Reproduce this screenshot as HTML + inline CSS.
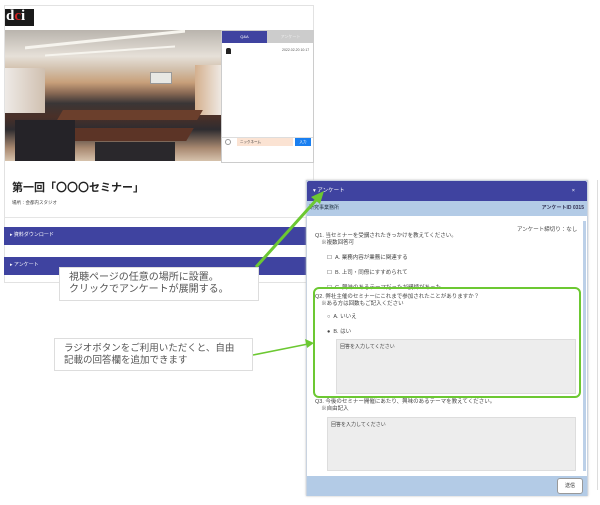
<!DOCTYPE html>
<html><head><meta charset="utf-8"><style>
*{margin:0;padding:0;box-sizing:border-box}
body{width:600px;height:505px;background:#fff;position:relative;overflow:hidden;font-family:"Liberation Sans","Noto Sans CJK JP",sans-serif;color:#333}
.a{position:absolute}
.bar{background:#3f43a0;color:#fff;font-size:5px;padding-left:6px;line-height:17px}
.t{font-size:5.5px;color:#444}
</style></head><body>
<div class="a" style="left:4px;top:5px;width:310px;height:278px;border:1px solid #e2e2e2"></div>
<div class="a" style="left:5px;top:9px;width:29px;height:17px;background:#1a1a1a;color:#fff;font:bold 15px 'Liberation Serif',serif;line-height:15px;padding-left:1px">d<span style="color:#c22">c</span>i</div>
<!-- photo -->
<div class="a" style="left:5px;top:30px;width:216px;height:131px;overflow:hidden;background:linear-gradient(180deg,#b9b4ad 0%,#e6e0d8 20%,#d2c0ac 30%,#c8a07a 40%,#8a6a55 48%,#3a3636 56%,#4a3028 66%,#2e2c30 76%,#a88870 90%,#d6c2ac 100%)">
 <div class="a" style="left:20px;top:8px;width:160px;height:3px;background:#f6f4ee;transform:skewY(-6deg)"></div>
 <div class="a" style="left:40px;top:20px;width:130px;height:2px;background:#f6f4ee;transform:skewY(-4deg)"></div>
 <div class="a" style="left:0;top:38px;width:40px;height:45px;background:linear-gradient(90deg,#eeeae6,#d0c0b0)"></div>
 <div class="a" style="left:190px;top:35px;width:26px;height:50px;background:linear-gradient(90deg,#d4b08e,#eee8e2)"></div>
 <div class="a" style="left:145px;top:42px;width:22px;height:12px;background:#e8e8e4;border:1px solid #999"></div>
 <div class="a" style="left:55px;top:80px;width:140px;height:10px;background:#6b3f2c;transform:skewX(-30deg)"></div>
 <div class="a" style="left:65px;top:98px;width:120px;height:13px;background:#5c3426;transform:skewX(-30deg)"></div>
 <div class="a" style="left:10px;top:90px;width:60px;height:41px;background:#252328"></div>
 <div class="a" style="left:90px;top:112px;width:80px;height:19px;background:#2a282c"></div>
</div>
<!-- chat -->
<div class="a" style="left:221px;top:30px;width:93px;height:133px;border:1px solid #ccc;background:#fff">
 <div class="a" style="left:0;top:0;width:45px;height:12px;background:#3f43a0;color:#fff;font-size:4px;text-align:center;line-height:12px">Q&amp;A</div>
 <div class="a" style="left:45px;top:0;width:47px;height:12px;background:#ccc;color:#eee;font-size:4px;text-align:center;line-height:12px">アンケート</div>
 <div class="a" style="left:4px;top:17px;width:5px;height:6px;background:#222;border-radius:2px 2px 0 0"></div>
 <div class="a" style="left:60px;top:17px;font-size:3.5px;color:#555">2022.02.20 10:17</div>
 <div class="a" style="left:0;top:106px;width:91px;height:1px;background:#ddd"></div>
 <div class="a" style="left:3px;top:108px;width:6px;height:6px;border:1px solid #999;border-radius:50%"></div>
 <div class="a" style="left:15px;top:107px;width:56px;height:8px;background:#fbe3d3;font-size:3.5px;line-height:8px;padding-left:3px">ニックネーム</div>
 <div class="a" style="left:73px;top:107px;width:16px;height:8px;background:#1a7ff0;color:#fff;font-size:3.5px;line-height:8px;text-align:center">入力</div>
</div>
<div class="a" style="left:12px;top:179px;font-size:11px;font-weight:bold;color:#222">第一回「〇〇〇セミナー」</div>
<div class="a t" style="left:12px;top:200px;font-size:4.5px">場所：会都内スタジオ</div>
<div class="a" style="left:5px;top:217px;width:308px;height:1px;background:#e5e5e5"></div>
<div class="a bar" style="left:4px;top:227px;width:302px;height:18px">▸ 資料ダウンロード</div>
<div class="a bar" style="left:4px;top:257px;width:302px;height:18px">▸ アンケート</div>
<!-- survey dialog -->
<div class="a" style="left:306px;top:180px;width:282px;height:316px;border:1px solid #c9d3e0;background:#fff;box-shadow:0 0 2px #bbb">
 <div class="a bar" style="left:0;top:0;width:280px;height:20px;line-height:20px;font-size:5.5px;border-radius:2px 2px 0 0">▾ アンケート<span style="position:absolute;right:12px">×</span></div>
 <div class="a" style="left:0;top:20px;width:280px;height:15px;background:#b3cbe6;font-size:5px;line-height:15px;padding-left:2px;color:#234">研究事業務所<span style="position:absolute;right:3px;font-weight:bold;color:#335">アンケートID 0315</span></div>
 <div class="a" style="left:276px;top:40px;width:3px;height:250px;background:#bcd0e8"></div>
 <div class="a t" style="left:210px;top:44px">アンケート締切り：なし</div>
 <div class="a t" style="left:8px;top:52px;line-height:7px">Q1. 当セミナーを受講されたきっかけを教えてください。<br>&nbsp;&nbsp;&nbsp;&nbsp;※複数回答可</div>
 <div class="a t" style="left:20px;top:72px">☐ &nbsp;A. 業務内容が業務に関連する</div>
 <div class="a t" style="left:20px;top:87px">☐ &nbsp;B. 上司・同僚にすすめられて</div>
 <div class="a t" style="left:20px;top:102px">☐ &nbsp;C. 興味のあるテーマだったが講師があった</div>
 <div class="a t" style="left:8px;top:113px;line-height:7px">Q2. 弊社主催のセミナーにこれまで参加されたことがありますか？<br>&nbsp;&nbsp;&nbsp;&nbsp;※ある方は回数もご記入ください</div>
 <div class="a t" style="left:20px;top:131px">○ &nbsp;A. いいえ</div>
 <div class="a t" style="left:20px;top:146px">● &nbsp;B. はい</div>
 <div class="a" style="left:29px;top:158px;width:240px;height:55px;background:#ededed;border:1px solid #ddd;font-size:5px;padding:3px;color:#444">回答を入力してください</div>
 <div class="a t" style="left:8px;top:218px;line-height:7px">Q3. 今後のセミナー開催にあたり、興味のあるテーマを教えてください。<br>&nbsp;&nbsp;&nbsp;&nbsp;※自由記入</div>
 <div class="a" style="left:20px;top:236px;width:249px;height:54px;background:#ededed;border:1px solid #ddd;font-size:5px;padding:3px;color:#444">回答を入力してください</div>
 <div class="a" style="left:0;top:295px;width:280px;height:20px;background:#b3cbe6"></div>
 <div class="a" style="left:250px;top:297px;width:26px;height:16px;background:#fff;border:1px solid #999;border-radius:3px;font-size:5px;text-align:center;line-height:14px">送信</div>
</div>
<div class="a" style="left:313px;top:287px;width:268px;height:111px;border:2px solid #6cc832;border-radius:6px"></div>
<div class="a" style="left:597px;top:180px;width:1px;height:310px;background:#ddd"></div>
<!-- arrows -->
<svg class="a" style="left:0;top:0" width="600" height="505">
 <line x1="256" y1="267" x2="318" y2="198" stroke="#6cc832" stroke-width="3"/>
 <polygon points="324,191 311,197 320,204" fill="#6cc832"/>
 <line x1="253" y1="355" x2="308" y2="344" stroke="#6cc832" stroke-width="1.5"/>
 <polygon points="314,343 305,339 307,348" fill="#6cc832"/>
</svg>
<div class="a" style="left:59px;top:267px;width:200px;height:34px;background:#fff;border:1px solid #ddd;font-size:10px;color:#555;line-height:12px;padding:4px 0 0 9px">視聴ページの任意の場所に設置。<br>クリックでアンケートが展開する。</div>
<div class="a" style="left:54px;top:338px;width:199px;height:33px;background:#fff;border:1px solid #ddd;font-size:9.5px;color:#555;line-height:12px;padding:4px 0 0 9px">ラジオボタンをご利用いただくと、自由<br>記載の回答欄を追加できます</div>
</body></html>
